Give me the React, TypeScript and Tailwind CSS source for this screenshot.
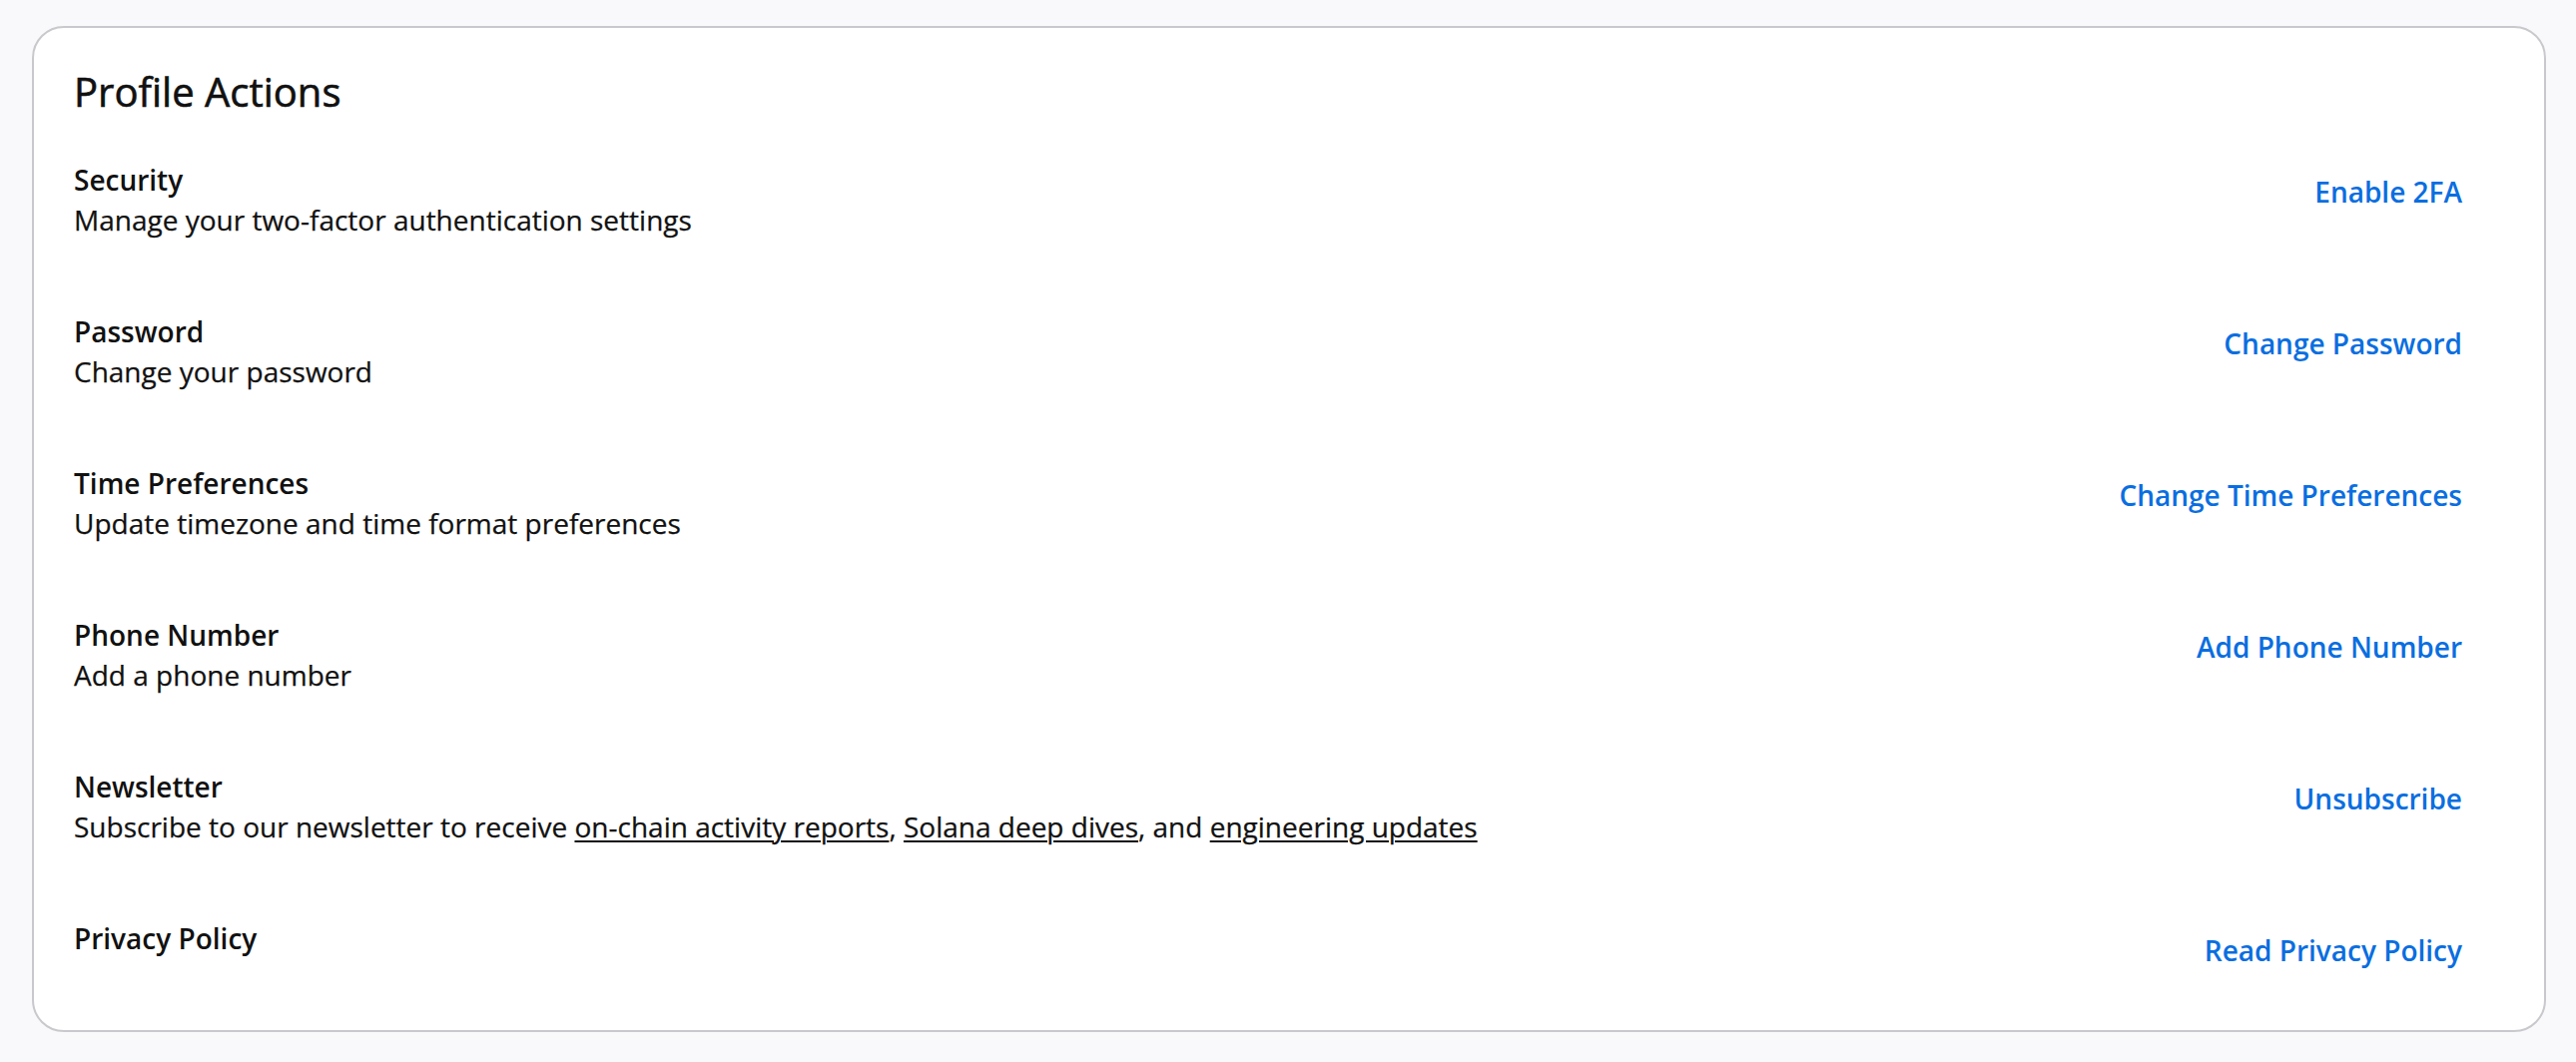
import * as React from "react";

type ProfileAction = {
  title: string;
  description?: React.ReactNode;
  action: string;
};

const UL = "underline decoration-2 underline-offset-[3px]";

const actions: ProfileAction[] = [
  {
    title: "Security",
    description: "Manage your two-factor authentication settings",
    action: "Enable 2FA",
  },
  {
    title: "Password",
    description: "Change your password",
    action: "Change Password",
  },
  {
    title: "Time Preferences",
    description: "Update timezone and time format preferences",
    action: "Change Time Preferences",
  },
  {
    title: "Phone Number",
    description: "Add a phone number",
    action: "Add Phone Number",
  },
  {
    title: "Newsletter",
    description: (
      <>
        Subscribe to our newsletter to receive{" "}
        <a href="#" className={UL}>
          on-chain activity reports
        </a>
        ,{" "}
        <a href="#" className={UL}>
          Solana deep dives
        </a>
        , and{" "}
        <a href="#" className={UL}>
          engineering updates
        </a>
      </>
    ),
    action: "Unsubscribe",
  },
  {
    title: "Privacy Policy",
    action: "Read Privacy Policy",
  },
];

function ActionRow({ title, description, action }: ProfileAction) {
  return (
    <div className="flex items-start justify-between">
      <div className="min-w-0">
        <div className="text-[28px] leading-[40px] font-semibold text-[#111111]">
          {title}
        </div>
        {description ? (
          <div className="text-[28px] leading-[40px] text-[#111111] [-webkit-text-stroke:0.25px_#111111]">
            {description}
          </div>
        ) : null}
      </div>
      <button
        type="button"
        className="mt-3 shrink-0 pl-10 pr-[42px] text-[28px] leading-[40px] font-semibold text-[#0a6ee0]"
      >
        {action}
      </button>
    </div>
  );
}

export default function App() {
  return (
    <div className="min-h-screen bg-[#f9f9fb] pt-[26px] pb-[30px] pl-8 pr-[30px] font-['Open_Sans',sans-serif]">
      <div className="rounded-[32px] border-2 border-[#c8c8cd] bg-white px-10 pt-10 pb-[60px]">
        <h2 className="text-[40px] leading-[48px] font-medium text-[#111111] [-webkit-text-stroke:0.6px_#111111]">
          Profile Actions
        </h2>
        <div className="mt-11 flex flex-col gap-[72px]">
          {actions.map((a) => (
            <ActionRow key={a.title} {...a} />
          ))}
        </div>
      </div>
    </div>
  );
}
